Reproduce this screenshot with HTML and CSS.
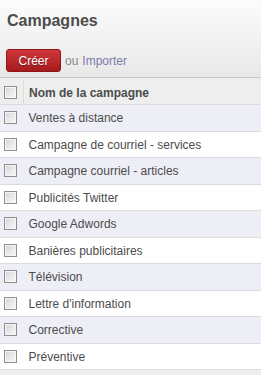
FILE: index.html
```html
<!DOCTYPE html>
<html lang="fr">
<head>
  <meta charset="UTF-8" />
  <meta name="viewport" content="width=device-width, initial-scale=1.0"/>
  <title>Campagnes</title>
  <link rel="stylesheet" href="styles.css">
</head>
<body>

  <div class="header">
    <h2>Campagnes</h2>
    <div class="actions">
      <button class="create">Créer</button>
      <span class="or">ou</span> <a href="#" class="import">Importer</a>
    </div>
  </div>

  <table class="list">
    <thead>
      <tr>
        <th class="sel"><span class="check"></span></th>
        <th>Nom de la campagne</th>
      </tr>
    </thead>
    <tbody>
      <tr><td class="sel"><span class="check"></span></td><td>Ventes à distance</td></tr>
      <tr><td class="sel"><span class="check"></span></td><td>Campagne de courriel - services</td></tr>
      <tr><td class="sel"><span class="check"></span></td><td>Campagne courriel - articles</td></tr>
      <tr><td class="sel"><span class="check"></span></td><td>Publicités Twitter</td></tr>
      <tr><td class="sel"><span class="check"></span></td><td>Google Adwords</td></tr>
      <tr><td class="sel"><span class="check"></span></td><td>Banières publicitaires</td></tr>
      <tr><td class="sel"><span class="check"></span></td><td>Télévision</td></tr>
      <tr><td class="sel"><span class="check"></span></td><td>Lettre d'information</td></tr>
      <tr><td class="sel"><span class="check"></span></td><td>Corrective</td></tr>
      <tr><td class="sel"><span class="check"></span></td><td>Préventive</td></tr>
    </tbody>
  </table>

</body>
</html>
```

FILE: styles.css
```css
body {
  font-family: "Liberation Sans", Arial, sans-serif;
  font-size: 12px;
  color: #4c4c4c;
  margin: 0;
  background: #eeeeee;
}
.header {
  height: 78px;
  padding: 12px 0 0 6px;
  box-sizing: border-box;
  background: linear-gradient(#fcfcfc, #e8e8e8);
  border-bottom: 1px solid #c8c8c8;
}
h2 {
  margin: 0 0 0 1px;
  font-size: 16px;
  line-height: 18px;
  color: #4c4c4c;
}
.actions {
  margin-top: 19px;
  display: flex;
  align-items: center;
}
.create {
  height: 23px;
  width: 55px;
  padding: 0;
  margin-right: 4px;
  font-family: inherit;
  font-size: 12px;
  color: #fff;
  text-shadow: 0 1px 1px rgba(0,0,0,0.35);
  background: linear-gradient(#d0383a, #a51a1d);
  border: 1px solid #8c1518;
  border-radius: 3px;
}
.or {
  color: #8a8a8a;
}
.import {
  margin-left: 4px;
  color: #7c7bad;
  text-decoration: none;
}
.list {
  width: 100%;
  border-collapse: collapse;
  background: #fff;
  margin-top: 1px;
}
.list th,
.list td {
  text-align: left;
  padding: 5px 6px 4.5px 5px;
  line-height: 16px;
  border-bottom: 1px solid #dcdcdc;
}
.list th {
  background: #eeeeee;
  font-weight: bold;
  padding-top: 6px;
  padding-bottom: 3px;
}
.list th.sel {
  border-right: 1px solid #dcdcdc;
  padding-top: 7px;
}
.list .sel {
  width: 13px;
  padding: 6px 6px 0 4px;
  vertical-align: top;
}
.list tbody tr:nth-child(odd) td {
  background: #eeeef6;
}
.check {
  display: block;
  width: 11px;
  height: 11px;
  border: 1px solid #8e8e8e;
  background: linear-gradient(135deg, #d4d4d4, #fbfbfb);
  box-shadow: inset 0 0 0 1px #f6f6f6;
}
```
